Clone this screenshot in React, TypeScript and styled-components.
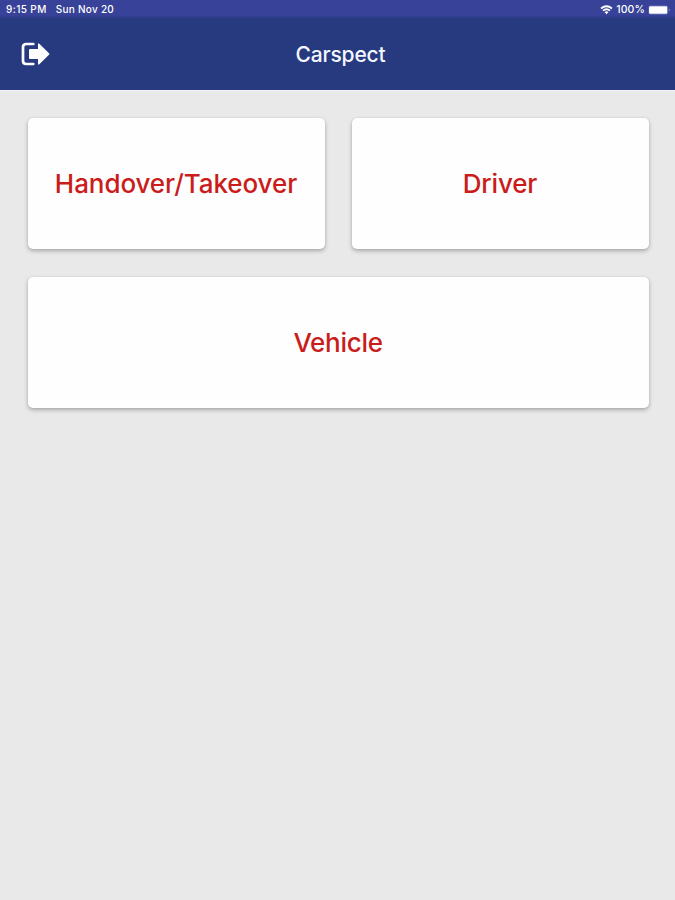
import React from "react";
import styled, { createGlobalStyle } from "styled-components";

const GlobalStyle = createGlobalStyle`
  * { box-sizing: border-box; }
  body { margin: 0; background: #e9e9e9; font-family: Inter, "Liberation Sans", sans-serif; }
`;

const Screen = styled.div`
  display: flex;
  flex-direction: column;
  min-height: 900px;
  background: #e9e9e9;
`;

const StatusBar = styled.div`
  display: flex;
  align-items: center;
  justify-content: space-between;
  height: 18px;
  padding: 1px 4px 0 6px;
  background: linear-gradient(#374298 0 15px, #2f3d8c);
  color: #fff;
  font-size: 10px;
  font-weight: 500;
  line-height: 17px;
`;

const StatusGroup = styled.div<{ $gap: number }>`
  display: flex;
  align-items: center;
  gap: ${(p) => p.$gap}px;
`;

const Clock = styled.span<{ $spacing: number }>`
  letter-spacing: ${(p) => p.$spacing}px;
`;

const Charge = styled.span`
  font-size: 10.5px;
  letter-spacing: 0.1px;
`;

const Header = styled.header`
  display: grid;
  grid-template-columns: 60px 1fr 60px;
  align-items: center;
  height: 72px;
  background: #273a80;
  box-shadow: 0 1px 0 #f4f4f6;
`;

const ExitButton = styled.button`
  display: flex;
  padding: 0 0 0 21px;
  border: 0;
  background: none;
  color: #fff;
`;

const Title = styled.h1`
  margin: 0;
  padding: 2px 0 0 6px;
  color: #f5f7ff;
  font-size: 21px;
  font-weight: 450;
  line-height: 28px;
  letter-spacing: -0.15px;
  text-align: center;
`;

const Menu = styled.main`
  display: grid;
  grid-template-columns: 1fr 1fr;
  grid-auto-rows: 131px;
  gap: 28px 27px;
  padding: 28px 26.5px 0 27.5px;
`;

const Card = styled.button<{ $wide?: boolean; $spacing: number }>`
  grid-column: ${(p) => (p.$wide ? "1 / -1" : "auto")};
  padding: 1px 0 0;
  border: 0;
  border-radius: 5px;
  background: #fdfefd;
  box-shadow: 0 2px 4px rgba(0, 0, 0, 0.28), 0 0 2px rgba(0, 0, 0, 0.07);
  color: #cb1c1c;
  font: 500 26px/32px Inter, "Liberation Sans", sans-serif;
  letter-spacing: ${(p) => p.$spacing}px;
`;

const ExitIcon = () => (
  <svg width="29" height="26" viewBox="0 0 29 26" fill="none">
    <path d="M12.3 3H5.2Q2 3 2 6.2v13.6Q2 23 5.2 23h7.1" stroke="currentColor" strokeWidth="2.7" strokeLinecap="round" />
    <path d="M9 8h8V3.2q0-1.8 1.3-.5L28 12.2q.9.8 0 1.6l-9.7 9.5q-1.3 1.2-1.3-.5V18H9q-1 0-1-1V9q0-1 1-1Z" fill="currentColor" />
  </svg>
);

const WifiIcon = () => (
  <svg width="13" height="10" viewBox="0 0 13 10" fill="none" stroke="currentColor" strokeWidth="1.8">
    <path d="M1 3.5Q6.5-1 12 3.5M3 5.6q3.5-2.8 7 0" />
    <path d="m4.5 7.1 2 2.2 2-2.2q-2-1.5-4 0Z" fill="currentColor" stroke="none" />
  </svg>
);

const BatteryIcon = () => (
  <svg width="23" height="10" viewBox="0 0 23 10">
    <rect x=".4" y=".5" width="19.5" height="9" rx="2" fill="none" stroke="#5f69b3" strokeWidth=".6" />
    <rect x="1" y="1.3" width="18.3" height="7.4" rx="1.3" fill="#fff" />
    <path d="M21 3.5q1.5 1.5 0 3Z" fill="#a8add8" />
  </svg>
);

export default function App() {
  return (
    <Screen>
      <GlobalStyle />
      <StatusBar>
        <StatusGroup $gap={9}>
          <Clock $spacing={0.4}>9:15 PM</Clock>
          <Clock $spacing={0.28}>Sun Nov 20</Clock>
        </StatusGroup>
        <StatusGroup $gap={3}>
          <WifiIcon />
          <Charge>100%</Charge>
          <BatteryIcon />
        </StatusGroup>
      </StatusBar>
      <Header>
        <ExitButton aria-label="Log out">
          <ExitIcon />
        </ExitButton>
        <Title>Carspect</Title>
      </Header>
      <Menu>
        <Card $spacing={-0.08}>Handover/Takeover</Card>
        <Card $spacing={-0.15}>Driver</Card>
        <Card $wide $spacing={-0.3}>Vehicle</Card>
      </Menu>
    </Screen>
  );
}
